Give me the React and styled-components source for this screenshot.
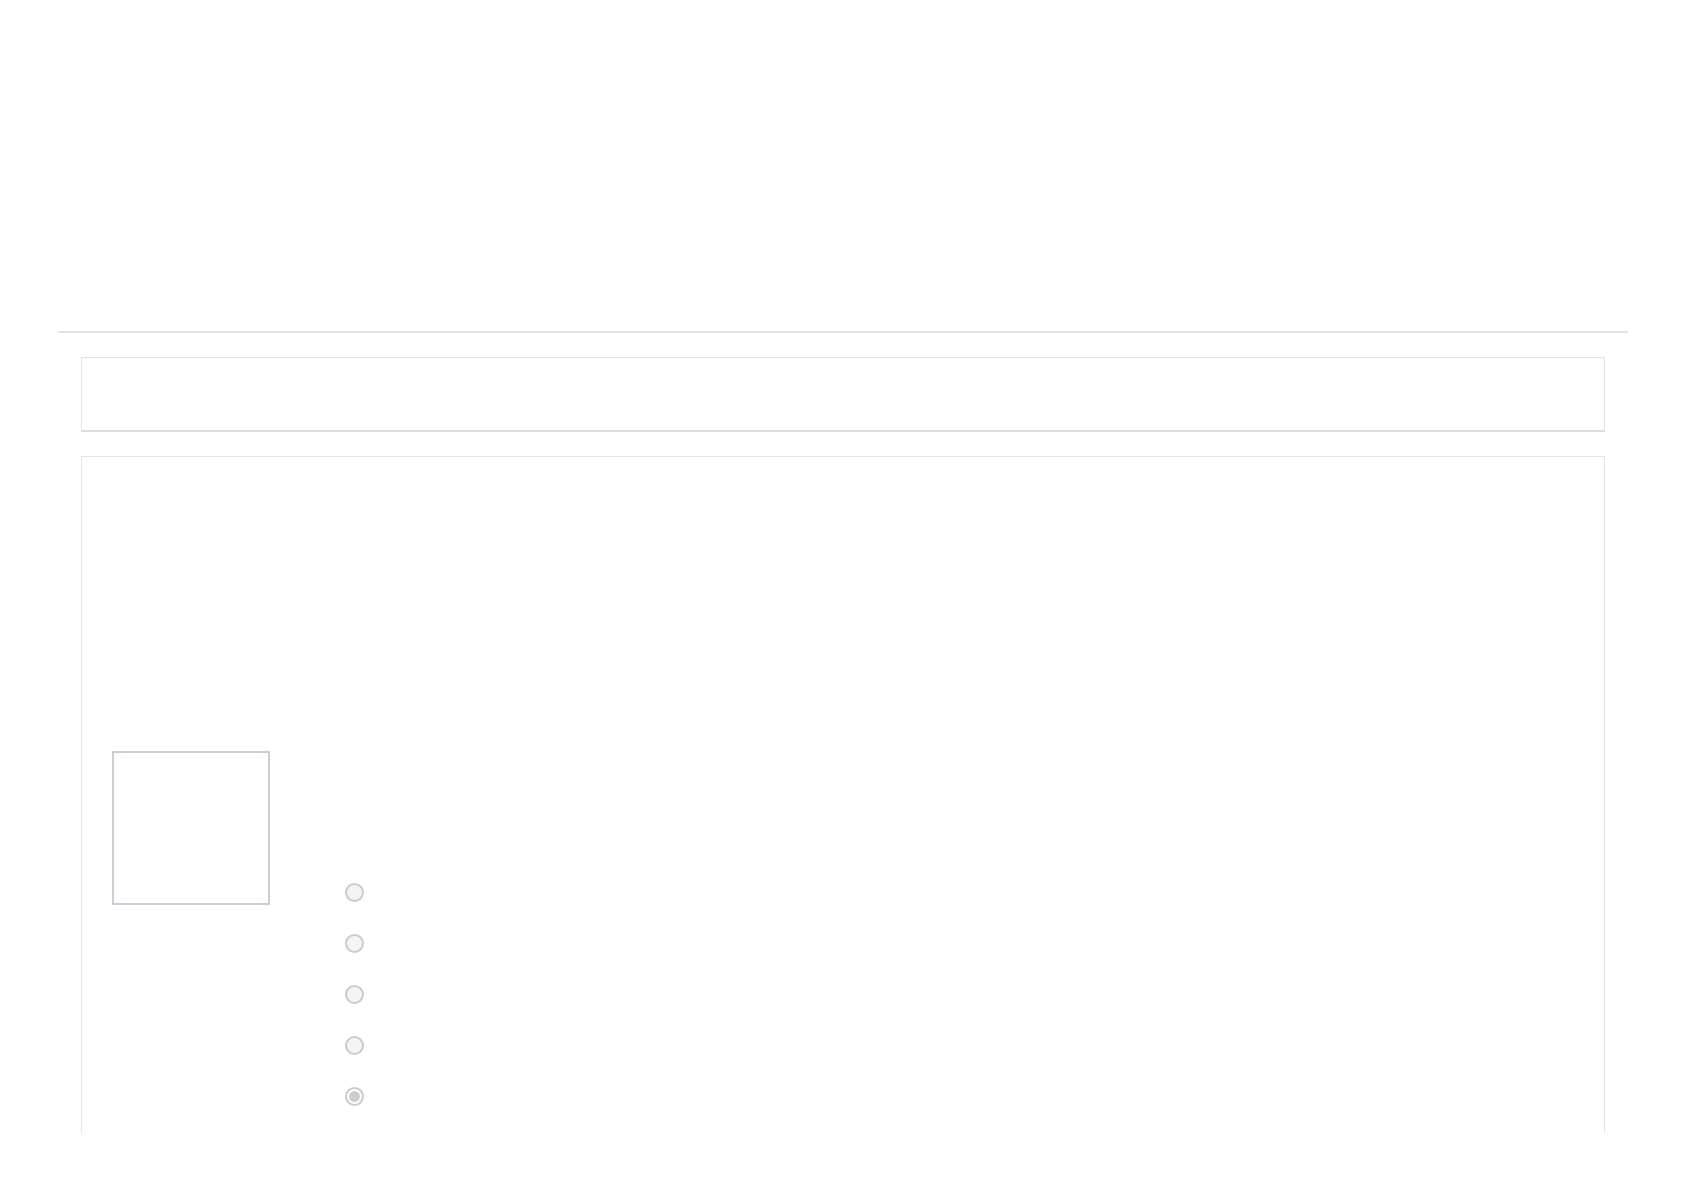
import React from "react";
import styled, { createGlobalStyle } from "styled-components";

const Global = createGlobalStyle`
  html, body { margin: 0; padding: 0; background: #ffffff; font-family: "Liberation Sans", Arial, sans-serif; }
`;

const Page = styled.div`
  padding: 331px 56px 0 58px;
  height: 1190px;
  box-sizing: border-box;
  overflow: hidden;
`;

const Rule = styled.div`
  height: 2px;
  background: #e4e1e1;
`;

const Inner = styled.div`
  padding: 24px 23px 0 23px;
  display: flex;
  flex-direction: column;
  gap: 24px;
`;

const Bar = styled.div`
  height: 72px;
  border: 1px solid #e2e2e2;
  border-bottom: 2px solid #dedede;
`;

const Panel = styled.div`
  height: 677px;
  box-sizing: border-box;
  border: 1px solid #e4e4e4;
  border-bottom: none;
  padding: 294px 0 0 30px;
  display: flex;
  align-items: flex-start;
`;

const Thumb = styled.div`
  width: 158px;
  height: 154px;
  box-sizing: border-box;
  border: 2px solid #c8cdd6;
  flex: none;
`;

const Options = styled.div`
  margin: 132px 0 0 75px;
  display: flex;
  flex-direction: column;
  gap: 32px;
`;

const Radio = styled.span`
  width: 19px;
  height: 19px;
  box-sizing: border-box;
  border-radius: 50%;
  border: 2px solid #cbcbcb;
  background: ${(p) => (p.$checked ? "#ffffff" : "#f4f4f4")};
  display: flex;
  align-items: center;
  justify-content: center;
  &::after {
    content: "";
    display: ${(p) => (p.$checked ? "block" : "none")};
    width: 11px;
    height: 11px;
    border-radius: 50%;
    background: #cdcdcd;
  }
`;

export default function App() {
  return (
    <>
      <Global />
      <Page>
        <Rule />
        <Inner>
          <Bar />
          <Panel>
            <Thumb />
            <Options>
              {[false, false, false, false, true].map((c, i) => (
                <Radio key={i} $checked={c} />
              ))}
            </Options>
          </Panel>
        </Inner>
      </Page>
    </>
  );
}
